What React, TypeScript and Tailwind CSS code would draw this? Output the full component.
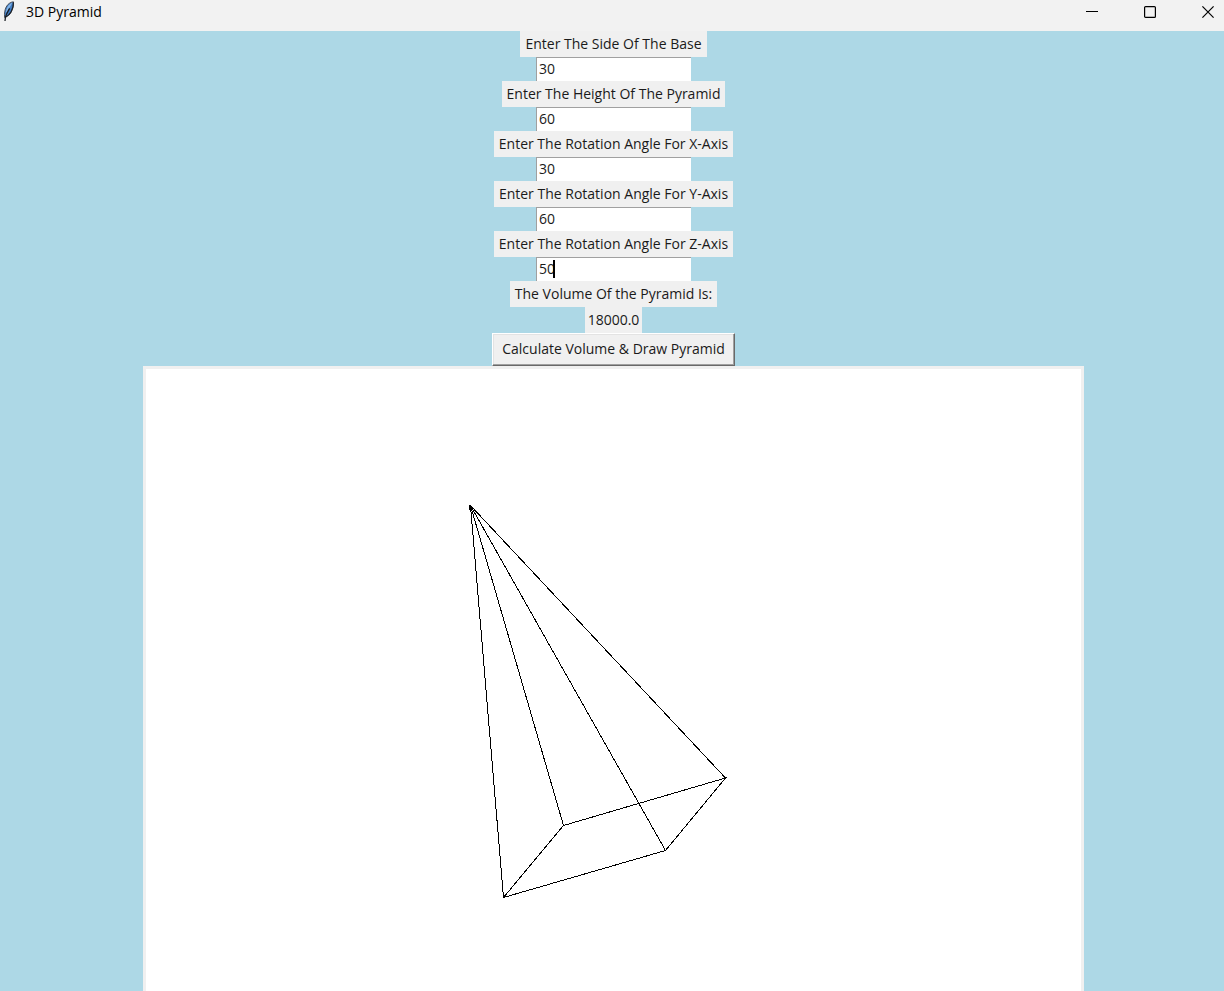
import { useState } from "react";

type Field = { id: string; label: string; initial: string; active?: boolean };

const fields: Field[] = [
  { id: "side", label: "Enter The Side Of The Base", initial: "30" },
  { id: "height", label: "Enter The Height Of The Pyramid", initial: "60" },
  { id: "angle-x", label: "Enter The Rotation Angle For X-Axis", initial: "30" },
  { id: "angle-y", label: "Enter The Rotation Angle For Y-Axis", initial: "60" },
  { id: "angle-z", label: "Enter The Rotation Angle For Z-Axis", initial: "50", active: true },
];

function FeatherIcon() {
  return (
    <svg width="16" height="22" viewBox="0 0 16 22" aria-hidden="true">
      <path d="M13.4 0.8C10.8 1 7.8 2.8 6.2 6C4.8 8.8 4.2 12.4 4.6 16.4C7.6 15.6 10.2 13.4 11.6 10.2C13 7.4 13.9 3.6 13.4 0.8Z" fill="#3f7cc4" stroke="#4a4f58" strokeWidth="1" />
      <path d="M12.4 1.8C9.6 2.6 7.4 5.4 6.4 8.8L5.6 12.6L9.4 6.8Z" fill="#86b6e8" />
      <path d="M13.4 1.4C13.6 4.2 12.6 8 11 11C9.8 13.2 7.8 15 5.6 16" fill="none" stroke="#1c2026" strokeWidth="1.2" />
      <path d="M9.6 7.4C7.8 10.4 6.2 13.4 5.4 16.4L5 20" fill="none" stroke="#1c2026" strokeWidth="1.3" />
    </svg>
  );
}

function TitleBar() {
  return (
    <header className="flex h-[31px] shrink-0 items-start justify-between bg-[#f2f2f2]">
      <div className="flex h-6 items-center gap-2.5">
        <FeatherIcon />
        <h1 className="font-['Open_Sans',sans-serif] text-[14px] leading-6 text-black">3D Pyramid</h1>
      </div>
      <div className="flex h-6 gap-[34px] pr-1">
        <button type="button" aria-label="Minimize" className="flex w-6 items-center justify-center">
          <svg width="12" height="12" viewBox="0 0 12 12" aria-hidden="true">
            <path d="M0 5.5H12" stroke="#000" strokeWidth="1" />
          </svg>
        </button>
        <button type="button" aria-label="Maximize" className="flex w-6 items-center justify-center">
          <svg width="12" height="12" viewBox="0 0 12 12" aria-hidden="true">
            <rect x="0.6" y="0.6" width="10.8" height="10.8" rx="1" fill="none" stroke="#000" strokeWidth="1.2" />
          </svg>
        </button>
        <button type="button" aria-label="Close" className="flex w-6 items-center justify-center">
          <svg width="12" height="12" viewBox="0 0 12 12" aria-hidden="true">
            <path d="M0.4 0.4L11.6 11.6M11.6 0.4L0.4 11.6" stroke="#000" strokeWidth="1.2" />
          </svg>
        </button>
      </div>
    </header>
  );
}

function Entry({ field }: { field: Field }) {
  const [value, setValue] = useState(field.initial);
  return (
    <>
      <label htmlFor={field.id} className="h-[26px] bg-[#f0f0f0] px-[5px] leading-[26px]">
        {field.label}
      </label>
      <div className="relative h-6 w-[155px]">
        <input
          id={field.id}
          value={value}
          onChange={(e) => setValue(e.target.value)}
          className="block h-6 w-full border-t border-l border-[#a0a0a0] bg-white pb-0.5 pl-0.5 outline-none"
        />
        {field.active && <span className="absolute top-[3px] left-[17px] h-[18px] w-0.5 bg-black" />}
      </div>
    </>
  );
}

export default function App() {
  return (
    <div className="flex min-h-screen flex-col bg-[#add8e6]">
      <TitleBar />
      <main className="flex flex-1 flex-col items-center pl-[3px] font-['Open_Sans',sans-serif] text-[14px] text-[#1a1a1a]">
        {fields.map((f) => (
          <Entry key={f.id} field={f} />
        ))}
        <p className="h-[26px] bg-[#f0f0f0] px-[5px] leading-[26px]">The Volume Of the Pyramid Is:</p>
        <output className="h-[26px] bg-[#f0f0f0] px-[3px] leading-[26px]">18000.0</output>
        <button
          type="button"
          className="h-[33px] border border-t-white border-r-[#696969] border-b-[#696969] border-l-white bg-[#f0f0f0] px-[9px] pb-0.5 shadow-[inset_-1px_-1px_0_#a0a0a0,inset_1px_1px_0_#e3e3e3]"
        >
          Calculate Volume &amp; Draw Pyramid
        </button>
        <div className="w-[941px] max-w-full flex-1 border-x-[3px] border-t-[3px] border-[#f0f0f0] bg-white">
          <svg width="935" height="622" viewBox="146 369 935 622" className="block max-w-full" role="img" aria-label="Pyramid" fill="none" stroke="#000" strokeWidth="1" shapeRendering="crispEdges">
            <path d="M503.5 897.5L563.5 825.5L725.5 778L665.5 850.5Z" />
            <path d="M470.5 505.5L503.5 897.5M470.5 505.5L563.5 825.5M470.5 505.5L665.5 850.5M470.5 505.5L725.5 778" />
            <path d="M469 505H471V510H469Z" fill="#000" stroke="none" />
          </svg>
        </div>
      </main>
    </div>
  );
}
